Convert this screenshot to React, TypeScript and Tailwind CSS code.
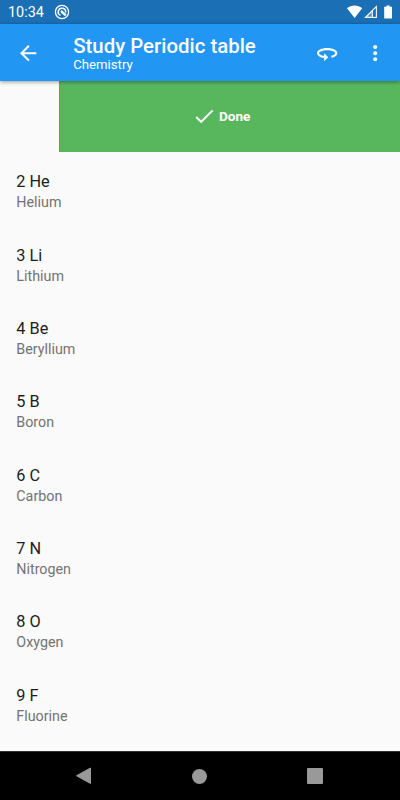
import { useState } from 'react';

const elements = [
  { number: 2, symbol: 'He', name: 'Helium' },
  { number: 3, symbol: 'Li', name: 'Lithium' },
  { number: 4, symbol: 'Be', name: 'Beryllium' },
  { number: 5, symbol: 'B', name: 'Boron' },
  { number: 6, symbol: 'C', name: 'Carbon' },
  { number: 7, symbol: 'N', name: 'Nitrogen' },
  { number: 8, symbol: 'O', name: 'Oxygen' },
  { number: 9, symbol: 'F', name: 'Fluorine' },
];

function Icon({ d }: { d: string }) {
  return (
    <svg viewBox="0 0 24 24" fill="currentColor" className="size-[24.4px]">
      <path d={d} />
    </svg>
  );
}

function StatusBar() {
  return (
    <div className="flex h-[24px] shrink-0 items-center bg-[#1a6fb5] pl-2 text-white">
      <span className="mt-[3px] w-[46px] text-[14.4px] leading-none">10:34</span>
      <svg viewBox="0 0 16 16" fill="none" stroke="currentColor" className="size-4">
        <circle cx="8" cy="8" r="6.6" strokeWidth="1.3" />
        <path d="M6.500 11.300A3.700 3.700 0 1 1 11.600 8.500" strokeWidth="1.500" />
        <path d="M7 7l4.800 4.300" strokeWidth="2.400" />
      </svg>
      <svg viewBox="0 0 46 14" fill="currentColor" className="mr-[7px] ml-auto h-3.5 w-[46px]">
        <path d="M0 3.2C4.4-.3 10.8-.3 15.2 3.2L7.6 13z" />
        <path d="M29.3 1.8v10.6H18.5z" fillOpacity="0.25" stroke="currentColor" strokeWidth="1.2" />
        <path d="M25.5 6.2l3.200-3.200v8.800h-3.200z" fill="#1a6fb5" />
        <path d="M24.8 6h1.100v6.500h-1.100z" />
        <path d="M37.2 1.8h2.300V.4h3.200v1.400H45V13.400h-7.800z" />
      </svg>
    </div>
  );
}

function AppBar() {
  return (
    <header className="z-10 flex h-[57px] shrink-0 items-center bg-[#2196f3] pt-[1.4px] pr-[12.2px] pl-[16.3px] text-white shadow-[0_1px_4px_rgba(0,0,0,0.4)]">
      <button aria-label="Back">
        <Icon d="M20 11H7.83l5.59-5.59L12 4l-8 8 8 8 1.41-1.41L7.83 13H20v-2z" />
      </button>
      <div className="ml-[32.5px] flex-1">
        <h1 className="text-[20.4px] leading-[23px] font-medium">Study Periodic table</h1>
        <p className="text-[13.2px] leading-[14px]">Chemistry</p>
      </div>
      <button aria-label="Flip cards">
        <Icon d="M12 7C6.48 7 2 9.24 2 12c0 2.24 2.94 4.13 7 4.77V20l4-4-4-4v2.73c-3.15-.56-5-1.9-5-2.73 0-1.06 3.04-3 8-3s8 1.94 8 3c0 .73-1.46 1.89-4 2.53v2.05c3.53-.77 6-2.53 6-4.58 0-2.76-4.48-5-10-5z" />
      </button>
      <button aria-label="More options" className="ml-6">
        <Icon d="M12 8c1.1 0 2-.9 2-2s-.9-2-2-2-2 .9-2 2 .9 2 2 2zm0 2c-1.1 0-2 .9-2 2s.9 2 2 2 2-.9 2-2-.9-2-2-2zm0 6c-1.1 0-2 .9-2 2s.9 2 2 2 2-.9 2-2-.9-2-2-2z" />
      </button>
    </header>
  );
}

function NavigationBar() {
  return (
    <nav className="flex h-[49px] shrink-0 items-center justify-between border-t border-[#303030] bg-black pr-[77px] pl-[76px] text-[#999]">
      <svg viewBox="0 0 16 18" fill="currentColor" className="h-[18px] w-4">
        <path d="M14.5 1v15.5L.5 8.75z" stroke="currentColor" strokeLinejoin="round" />
      </svg>
      <span className="size-[15px] rounded-full bg-[#999]" />
      <span className="size-4 rounded-[1px] bg-[#999]" />
    </nav>
  );
}

function App() {
  const [selected, setSelected] = useState<number | null>(null);

  return (
    <div className="flex h-[800px] w-[400px] flex-col overflow-hidden bg-[#fafafa] font-['Roboto',sans-serif]">
      <StatusBar />
      <AppBar />
      <main className="flex-1 overflow-hidden">
        {/* Swiped row */}
        <div className="ml-[59px] flex h-[71px] items-center justify-center border-l border-[#4caf50] bg-[#58b75c] pr-[18px] text-white">
          <Icon d="M9 16.17L4.83 12l-1.42 1.41L9 19 21 7l-1.41-1.41z" />
          <span className="ml-[3px] text-[13.6px] font-bold">Done</span>
        </div>
        <ul className="pt-[3.4px]">
          {elements.map(({ number, symbol, name }) => (
            <li
              key={number}
              onClick={() => setSelected(number)}
              aria-selected={selected === number}
              className="h-[73.33px] px-[16.3px] pt-[17px]"
            >
              <div className="text-[16.3px] leading-[20px] text-[#1d1d1d]">
                {number} {symbol}
              </div>
              <div className="text-[14.3px] leading-[21px] text-[#737373]">{name}</div>
            </li>
          ))}
        </ul>
      </main>
      <NavigationBar />
    </div>
  );
}

export default App;
